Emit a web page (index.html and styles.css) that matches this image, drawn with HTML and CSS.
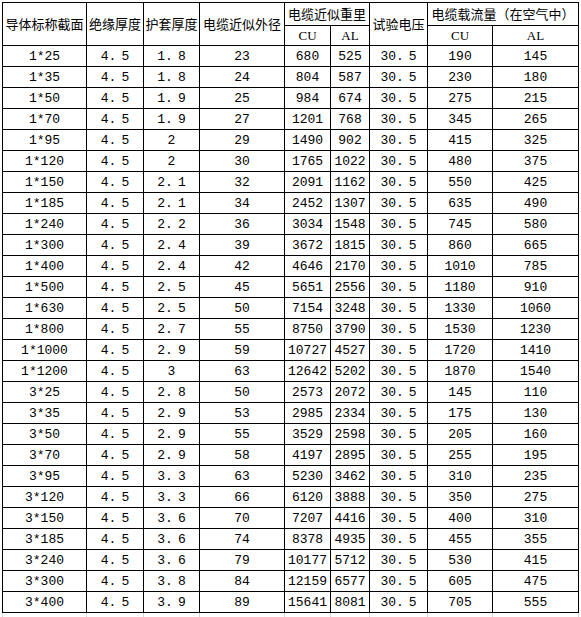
FILE: index.html
```html
<!DOCTYPE html>
<html lang="zh">
<head>
<meta charset="utf-8">
<title>电缆参数表</title>
<link rel="stylesheet" href="styles.css">
</head>
<body>
<div class="sheet-wrap">
<table class="sheet">
<colgroup>
<col class="c1"><col class="c2"><col class="c3"><col class="c4"><col class="c5"><col class="c6"><col class="c7"><col class="c8"><col class="c9">
</colgroup>
<thead>
<tr class="h1">
<th rowspan="2">导体标称截面</th>
<th rowspan="2">绝缘厚度</th>
<th rowspan="2">护套厚度</th>
<th rowspan="2">电缆近似外径</th>
<th colspan="2">电缆近似重里</th>
<th rowspan="2">试验电压</th>
<th colspan="2">电缆载流量（在空气中）</th>
</tr>
<tr class="h2">
<th class="lat">CU</th><th class="lat">AL</th><th class="lat">CU</th><th class="lat">AL</th>
</tr>
</thead>
<tbody>
<tr><td>1*25</td><td>4<i class="fs">.</i>5</td><td>1<i class="fs">.</i>8</td><td>23</td><td>680</td><td>525</td><td>30<i class="fs">.</i>5</td><td>190</td><td>145</td></tr>
<tr><td>1*35</td><td>4<i class="fs">.</i>5</td><td>1<i class="fs">.</i>8</td><td>24</td><td>804</td><td>587</td><td>30<i class="fs">.</i>5</td><td>230</td><td>180</td></tr>
<tr><td>1*50</td><td>4<i class="fs">.</i>5</td><td>1<i class="fs">.</i>9</td><td>25</td><td>984</td><td>674</td><td>30<i class="fs">.</i>5</td><td>275</td><td>215</td></tr>
<tr><td>1*70</td><td>4<i class="fs">.</i>5</td><td>1<i class="fs">.</i>9</td><td>27</td><td>1201</td><td>768</td><td>30<i class="fs">.</i>5</td><td>345</td><td>265</td></tr>
<tr><td>1*95</td><td>4<i class="fs">.</i>5</td><td>2</td><td>29</td><td>1490</td><td>902</td><td>30<i class="fs">.</i>5</td><td>415</td><td>325</td></tr>
<tr><td>1*120</td><td>4<i class="fs">.</i>5</td><td>2</td><td>30</td><td>1765</td><td>1022</td><td>30<i class="fs">.</i>5</td><td>480</td><td>375</td></tr>
<tr><td>1*150</td><td>4<i class="fs">.</i>5</td><td>2<i class="fs">.</i>1</td><td>32</td><td>2091</td><td>1162</td><td>30<i class="fs">.</i>5</td><td>550</td><td>425</td></tr>
<tr><td>1*185</td><td>4<i class="fs">.</i>5</td><td>2<i class="fs">.</i>1</td><td>34</td><td>2452</td><td>1307</td><td>30<i class="fs">.</i>5</td><td>635</td><td>490</td></tr>
<tr><td>1*240</td><td>4<i class="fs">.</i>5</td><td>2<i class="fs">.</i>2</td><td>36</td><td>3034</td><td>1548</td><td>30<i class="fs">.</i>5</td><td>745</td><td>580</td></tr>
<tr><td>1*300</td><td>4<i class="fs">.</i>5</td><td>2<i class="fs">.</i>4</td><td>39</td><td>3672</td><td>1815</td><td>30<i class="fs">.</i>5</td><td>860</td><td>665</td></tr>
<tr><td>1*400</td><td>4<i class="fs">.</i>5</td><td>2<i class="fs">.</i>4</td><td>42</td><td>4646</td><td>2170</td><td>30<i class="fs">.</i>5</td><td>1010</td><td>785</td></tr>
<tr><td>1*500</td><td>4<i class="fs">.</i>5</td><td>2<i class="fs">.</i>5</td><td>45</td><td>5651</td><td>2556</td><td>30<i class="fs">.</i>5</td><td>1180</td><td>910</td></tr>
<tr><td>1*630</td><td>4<i class="fs">.</i>5</td><td>2<i class="fs">.</i>5</td><td>50</td><td>7154</td><td>3248</td><td>30<i class="fs">.</i>5</td><td>1330</td><td>1060</td></tr>
<tr><td>1*800</td><td>4<i class="fs">.</i>5</td><td>2<i class="fs">.</i>7</td><td>55</td><td>8750</td><td>3790</td><td>30<i class="fs">.</i>5</td><td>1530</td><td>1230</td></tr>
<tr><td>1*1000</td><td>4<i class="fs">.</i>5</td><td>2<i class="fs">.</i>9</td><td>59</td><td>10727</td><td>4527</td><td>30<i class="fs">.</i>5</td><td>1720</td><td>1410</td></tr>
<tr><td>1*1200</td><td>4<i class="fs">.</i>5</td><td>3</td><td>63</td><td>12642</td><td>5202</td><td>30<i class="fs">.</i>5</td><td>1870</td><td>1540</td></tr>
<tr><td>3*25</td><td>4<i class="fs">.</i>5</td><td>2<i class="fs">.</i>8</td><td>50</td><td>2573</td><td>2072</td><td>30<i class="fs">.</i>5</td><td>145</td><td>110</td></tr>
<tr><td>3*35</td><td>4<i class="fs">.</i>5</td><td>2<i class="fs">.</i>9</td><td>53</td><td>2985</td><td>2334</td><td>30<i class="fs">.</i>5</td><td>175</td><td>130</td></tr>
<tr><td>3*50</td><td>4<i class="fs">.</i>5</td><td>2<i class="fs">.</i>9</td><td>55</td><td>3529</td><td>2598</td><td>30<i class="fs">.</i>5</td><td>205</td><td>160</td></tr>
<tr><td>3*70</td><td>4<i class="fs">.</i>5</td><td>2<i class="fs">.</i>9</td><td>58</td><td>4197</td><td>2895</td><td>30<i class="fs">.</i>5</td><td>255</td><td>195</td></tr>
<tr><td>3*95</td><td>4<i class="fs">.</i>5</td><td>3<i class="fs">.</i>3</td><td>63</td><td>5230</td><td>3462</td><td>30<i class="fs">.</i>5</td><td>310</td><td>235</td></tr>
<tr><td>3*120</td><td>4<i class="fs">.</i>5</td><td>3<i class="fs">.</i>3</td><td>66</td><td>6120</td><td>3888</td><td>30<i class="fs">.</i>5</td><td>350</td><td>275</td></tr>
<tr><td>3*150</td><td>4<i class="fs">.</i>5</td><td>3<i class="fs">.</i>6</td><td>70</td><td>7207</td><td>4416</td><td>30<i class="fs">.</i>5</td><td>400</td><td>310</td></tr>
<tr><td>3*185</td><td>4<i class="fs">.</i>5</td><td>3<i class="fs">.</i>6</td><td>74</td><td>8378</td><td>4935</td><td>30<i class="fs">.</i>5</td><td>455</td><td>355</td></tr>
<tr><td>3*240</td><td>4<i class="fs">.</i>5</td><td>3<i class="fs">.</i>6</td><td>79</td><td>10177</td><td>5712</td><td>30<i class="fs">.</i>5</td><td>530</td><td>415</td></tr>
<tr><td>3*300</td><td>4<i class="fs">.</i>5</td><td>3<i class="fs">.</i>8</td><td>84</td><td>12159</td><td>6577</td><td>30<i class="fs">.</i>5</td><td>605</td><td>475</td></tr>
<tr><td>3*400</td><td>4<i class="fs">.</i>5</td><td>3<i class="fs">.</i>9</td><td>89</td><td>15641</td><td>8081</td><td>30<i class="fs">.</i>5</td><td>705</td><td>555</td></tr>
<tr class="ghost"><td></td><td></td><td></td><td></td><td></td><td></td><td></td><td></td><td></td></tr>
</tbody>
</table>
</div>
</body>
</html>
```
FILE: styles.css
```css
html, body {
  margin: 0;
  padding: 0;
  background: #ffffff;
}

.sheet-wrap {
  padding: 2px 0 0 2px;
}

.sheet {
  border-collapse: collapse;
  table-layout: fixed;
  width: 577px;
  color: #000;
  font-family: "Liberation Mono", "Noto Sans CJK SC", monospace;
  font-size: 13px;
}

.c1 { width: 84px; }
.c2 { width: 57px; }
.c3 { width: 56px; }
.c4 { width: 85px; }
.c5 { width: 46px; }
.c6 { width: 39px; }
.c7 { width: 58px; }
.c8 { width: 65px; }
.c9 { width: 86px; }

.sheet th,
.sheet td {
  border: 1px solid #000;
  padding: 0;
  text-align: center;
  vertical-align: middle;
  white-space: nowrap;
  overflow: hidden;
  line-height: 14px;
}

.sheet td {
  padding-top: 2px;
}

/* wide decimal point, as the sheet's full-width stop */
.fs {
  font-style: normal;
  margin-right: 5px;
}

.sheet th {
  font-family: "Noto Sans CJK SC", sans-serif;
  font-weight: normal;
  font-size: 13px;
}

.sheet th.lat {
  font-family: "Liberation Serif", "Noto Sans CJK SC", serif;
  font-size: 13px;
}

.h1 { height: 23px; }
.h2 { height: 20px; }

.sheet tbody tr { height: 21px; }

.sheet tbody tr.ghost { height: 5px; }

.sheet tr.ghost td {
  padding: 0;
  border-bottom: none;
  border-left-color: #d4d4d4;
  border-right-color: #d4d4d4;
}
```
